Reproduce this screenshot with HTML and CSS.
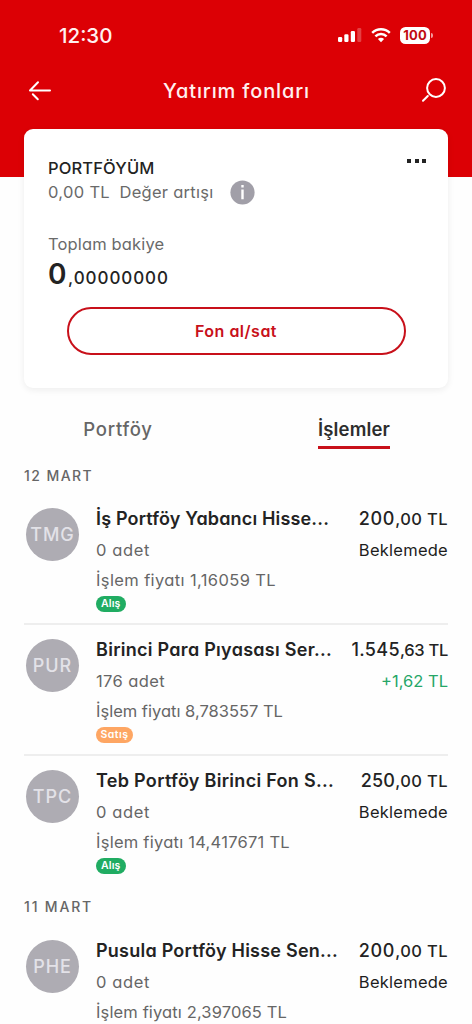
FILE: index.html
```html
<!DOCTYPE html>
<html lang="tr">
<head>
<meta charset="utf-8">
<title>Yatırım fonları</title>
<link rel="stylesheet" href="styles.css">
</head>
<body>
<header class="header">
  <div class="status">
    <span class="time">12:30</span>
    <div class="status-icons">
      <svg width="24" height="16" viewBox="0 0 24 16" fill="#fff"><rect x="0" y="10" width="4.2" height="5" rx="1.2"/><rect x="6.3" y="7.3" width="4.2" height="7.7" rx="1.2"/><rect x="12.8" y="4" width="4.2" height="11" rx="1.2"/><rect x="19.3" y="1" width="4" height="14" rx="1.2" opacity=".25"/></svg>
      <svg class="wifi" width="20" height="16" viewBox="0 0 20 16" fill="none" stroke="#fff" stroke-width="2.5"><path d="M1.2 5.9a12.7 12.7 0 0 1 17.6 0"/><path d="M4.4 9.3a8 8 0 0 1 11.2 0"/><path d="M10 15.3 6.9 12.1a4.5 4.5 0 0 1 6.2 0z" fill="#fff" stroke="none"/></svg>
      <span class="battery">100</span><span class="battery-cap"></span>
    </div>
  </div>
  <nav class="nav">
    <svg width="24" height="22" viewBox="0 0 24 22" fill="none" stroke="#fff" stroke-width="2" stroke-linecap="round" stroke-linejoin="round"><path d="M22 10.5H2L10 2.3M4.8 14.3 9.8 19.3"/></svg>
    <h1 class="title">Yatırım fonları</h1>
    <svg width="26" height="26" viewBox="0 0 26 26" fill="none" stroke="#fff" stroke-width="2" stroke-linecap="round"><circle cx="15" cy="10" r="8.9"/><path d="M6.8 18 2 22.8"/></svg>
  </nav>
</header>

<section class="card">
  <div class="card-head">
    <h2 class="card-title">PORTFÖYÜM</h2>
    <span class="more"><i></i><i></i><i></i></span>
  </div>
  <div class="gain">
    <span class="gain-value">0,00 TL</span>
    <span class="gain-label">Değer artışı</span>
    <svg width="25" height="25" viewBox="0 0 25 25"><circle cx="12.5" cy="12.5" r="12.1" fill="#a19fa8"/><path d="M12.5 9.5v9.8M12.5 5v2.6" stroke="#fff" stroke-width="2.4"/></svg>
  </div>
  <div class="total-label">Toplam bakiye</div>
  <div class="total"><span class="total-int">0</span><span class="total-dec">,00000000</span></div>
  <button class="trade">Fon al/sat</button>
</section>

<div class="tabs">
  <div class="tab"><span class="tab-text">Portföy</span></div>
  <div class="tab active"><span class="tab-text">İşlemler</span></div>
</div>

<main class="list">
  <h3 class="date">12 MART</h3>
  <article class="row">
    <span class="avatar">TMG</span>
    <div class="info">
      <div class="name n1">İş Portföy Yabancı Hisse...</div>
      <div class="units u1">0 adet</div>
      <div class="price p1">İşlem fiyatı 1,16059 TL</div>
      <span class="badge buy">Alış</span>
    </div>
    <div class="side">
      <div class="amount"><span class="int i1">200</span><span class="dec">,00 TL</span></div>
      <div class="state">Beklemede</div>
    </div>
  </article>
  <article class="row">
    <span class="avatar">PUR</span>
    <div class="info">
      <div class="name n2">Birinci Para Pıyasası Ser...</div>
      <div class="units u2">176 adet</div>
      <div class="price p2">İşlem fiyatı 8,783557 TL</div>
      <span class="badge sell">Satış</span>
    </div>
    <div class="side">
      <div class="amount"><span class="int i2">1.545</span><span class="dec d2">,63 TL</span></div>
      <div class="state profit">+1,62 TL</div>
    </div>
  </article>
  <article class="row last">
    <span class="avatar">TPC</span>
    <div class="info">
      <div class="name n3">Teb Portföy Birinci Fon S...</div>
      <div class="units u1">0 adet</div>
      <div class="price p3">İşlem fiyatı 14,417671 TL</div>
      <span class="badge buy">Alış</span>
    </div>
    <div class="side">
      <div class="amount"><span class="int i3">250</span><span class="dec">,00 TL</span></div>
      <div class="state">Beklemede</div>
    </div>
  </article>
  <h3 class="date second">11 MART</h3>
  <article class="row last">
    <span class="avatar">PHE</span>
    <div class="info">
      <div class="name n4">Pusula Portföy Hisse Sen...</div>
      <div class="units u1">0 adet</div>
      <div class="price p4">İşlem fiyatı 2,397065 TL</div>
    </div>
    <div class="side">
      <div class="amount"><span class="int i1">200</span><span class="dec">,00 TL</span></div>
      <div class="state">Beklemede</div>
    </div>
  </article>
</main>
</body>
</html>
```
FILE: styles.css
```css
* { box-sizing: border-box; margin: 0; padding: 0; }
html { height: 1024px; overflow: hidden; }
body {
  width: 472px; height: 1024px; overflow: hidden; background: #fefefe;
  font-family: Inter, "Liberation Sans", sans-serif;
  font-feature-settings: "cv11"; color: #232323; white-space: nowrap;
}

/* header */
.header { height: 177px; background: #dc0005; color: #fff; padding-top: 22px; }
.status { display: flex; justify-content: space-between; align-items: center; height: 26px; padding: 0 39px 0 59px; }
.time { font-size: 20.5px; font-weight: 500; letter-spacing: 0; color: #fff0f0; }
.status-icons { display: flex; align-items: center; }
.wifi { margin-left: 9px; }
.battery {
  margin-left: 9px; width: 30px; height: 17px; border-radius: 5.5px; background: #fff;
  color: #c00a10; font-size: 13px; line-height: 17px; font-weight: 700; letter-spacing: .2px; text-align: center;
}
.battery-cap { width: 2px; height: 5px; margin-left: 1px; border-radius: 0 2px 2px 0; background: #f2999b; }
.nav { display: flex; justify-content: space-between; align-items: center; margin-top: 29px; height: 28px; padding: 0 25px 0 28px; }
.title { font-size: 20px; font-weight: 500; letter-spacing: .86px; color: #fff0f0; }

/* portfolio card */
.card {
  position: relative; width: 424px; height: 259px; margin: -48px 24px 0; padding: 24px 24px 0;
  background: #fff; border-radius: 9px; box-shadow: 0 2px 7px rgba(0,0,0,.07);
}
.card-head { display: flex; justify-content: space-between; height: 29px; }
.card-title { font-size: 16.5px; line-height: 30px; font-weight: 500; letter-spacing: .14px; }
.more { display: flex; gap: 3.5px; padding-top: 6px; margin-right: -2px; }
.more i { width: 4px; height: 4px; background: #232323; }
.gain { display: flex; align-items: center; height: 20px; color: #6a6a6a; font-size: 16.5px; }
.gain-value { width: 71.5px; letter-spacing: .32px; }
.gain-label { width: 110.5px; letter-spacing: .27px; }
.total-label { margin-top: 32px; height: 20px; line-height: 20px; font-size: 16.5px; letter-spacing: .15px; color: #6a6a6a; }
.total { display: flex; align-items: baseline; height: 34px; line-height: 34px; margin-top: 3px; }
.total-int { font-size: 28px; font-weight: 600; width: 20px; }
.total-dec { font-size: 17px; font-weight: 500; letter-spacing: .94px; }
.trade {
  display: block; width: 339px; height: 48px; margin: 16px 0 0 18.5px;
  border: 2.5px solid #c8101a; border-radius: 24px; background: #fff; color: #c8101a;
  font: 600 16px Inter, "Liberation Sans", sans-serif; font-feature-settings: "cv11"; letter-spacing: .49px;
}

/* tabs */
.tabs { display: grid; grid-template-columns: 236px 236px; height: 68px; padding-top: 26px; }
.tab { text-align: center; font-size: 18.5px; font-weight: 500; color: #666; }
.tab-text { display: inline-block; height: 35px; line-height: 31px; letter-spacing: .76px; }
.active .tab-text { color: #2d2d2d; font-weight: 600; letter-spacing: .14px; border-bottom: 3px solid #c8101a; }

/* transactions */
.list { padding: 0 24px; }
.date { height: 38px; line-height: 39px; font-size: 14px; font-weight: 500; letter-spacing: 1.42px; color: #666; }
.date.second { height: 38.5px; line-height: 40px; letter-spacing: 1.82px; }
.row { display: flex; height: 131px; padding-top: 14px; border-bottom: 2px solid #eee; }
.row.last { border-bottom-color: transparent; }
.avatar {
  width: 53px; height: 53px; margin-left: 2px; border-radius: 50%; background: #aeacb3; color: #e3e2e8;
  font-size: 18px; line-height: 53px; font-weight: 500; letter-spacing: .95px; text-align: center;
}
.info { margin-left: 17px; flex: 1; }
.name { font-size: 18px; line-height: 24px; font-weight: 600; margin-top: -1px; }
.units { font-size: 16.5px; line-height: 20px; margin-top: 9px; color: #666; }
.price { font-size: 16.5px; line-height: 20px; margin-top: 10px; color: #666; }
.side { text-align: right; }
.amount { line-height: 24px; margin-top: -1px; font-weight: 500; }
.int { font-size: 18px; }
.dec { font-size: 16.5px; letter-spacing: .4px; }
.state { font-size: 16.5px; line-height: 20px; margin-top: 9px; letter-spacing: .25px; color: #1d1d1d; }
.state.profit { color: #26a667; letter-spacing: 0; }
.badge {
  display: block; width: 29.5px; height: 16px; margin-top: 6px; border-radius: 8px; color: #fff;
  font-size: 10.5px; line-height: 16px; font-weight: 600; letter-spacing: .15px; text-align: center;
}
.buy { background: #20ac62; }
.sell { background: #fea663; width: 37px; letter-spacing: .48px; }

/* optical tracking per label */
.n1 { letter-spacing: .16px; }
.n2 { letter-spacing: .28px; }
.n3 { letter-spacing: .3px; }
.n4 { letter-spacing: .23px; }
.u1 { letter-spacing: .62px; }
.u2 { letter-spacing: .39px; }
.p1 { letter-spacing: .38px; }
.p2 { letter-spacing: 0; }
.p3 { letter-spacing: .25px; }
.p4 { letter-spacing: .13px; }
.i1 { letter-spacing: .75px; }
.i2 { letter-spacing: .35px; }
.i3 { letter-spacing: .25px; }
.d2 { letter-spacing: -.3px; }
```
